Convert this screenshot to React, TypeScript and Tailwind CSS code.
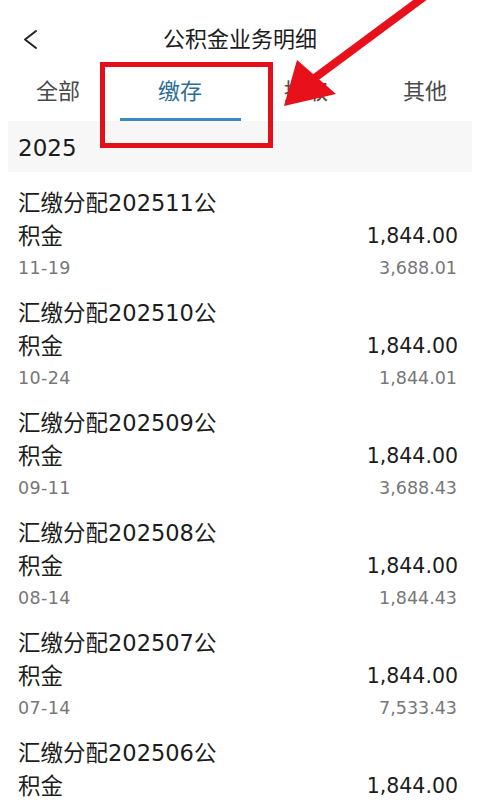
import React from 'react'

// ── Dados da lista ─────────────────────────────
const records = [
  { title: '汇缴分配202511公积金', date: '11-19', amount: '1,844.00', balance: '3,688.01' },
  { title: '汇缴分配202510公积金', date: '10-24', amount: '1,844.00', balance: '1,844.01' },
  { title: '汇缴分配202509公积金', date: '09-11', amount: '1,844.00', balance: '3,688.43' },
  { title: '汇缴分配202508公积金', date: '08-14', amount: '1,844.00', balance: '1,844.43' },
  { title: '汇缴分配202507公积金', date: '07-14', amount: '1,844.00', balance: '7,533.43' },
  { title: '汇缴分配202506公积金', date: '06-13', amount: '1,844.00', balance: '5,689.43' },
]

const tabs = ['全部', '缴存', '提取', '其他']

export default function App() {
  return (
    <div
      className="relative w-[480px] h-[802px] overflow-hidden bg-white text-[#1c1c1c]"
      style={{ fontFamily: '"DejaVu Sans", "Noto Sans CJK SC", sans-serif' }}
    >
      {/* Header */}
      <div className="relative flex h-[80px] items-center justify-center">
        <svg className="absolute left-[22px] top-[28px]" width="18" height="24" viewBox="0 0 18 24" fill="none">
          <path d="M14 3 L3 11.5 L14 20" stroke="#222" strokeWidth="2" strokeLinecap="round" strokeLinejoin="round" />
        </svg>
        <span className="text-[22px] leading-none">公积金业务明细</span>
      </div>

      {/* Tabs */}
      <div className="grid h-[41px] grid-cols-4">
        {tabs.map((t, i) => (
          <div key={t} className="flex flex-col items-center">
            <span
              className={`text-[22px] leading-[24px] ${i === 1 ? 'text-[#2c6e96]' : 'text-[#4a4a4a]'} ${i === 0 ? '-ml-[4px]' : ''} ${i === 2 ? 'ml-[12px]' : ''} ${i === 3 ? 'ml-[10px]' : ''}`}
            >
              {t}
            </span>
            {i === 1 && <div className="mt-[14px] h-[3px] w-[121px] bg-[#3a8ac2]" />}
          </div>
        ))}
      </div>

      {/* Ano */}
      <div className="mx-[8px] flex h-[51px] items-center bg-[#f7f7f7] px-[10px] pt-[3px]">
        <span className="text-[23px] leading-none">2025</span>
      </div>

      {/* Lista */}
      <div className="px-[18px]">
        {records.map(r => (
          <div key={r.date} className="h-[110px] pt-[15px]">
            <div className="flex items-end justify-between">
              <div className="w-[212px] text-[22.5px] leading-[33px]">{r.title}</div>
              <div className="pr-[4px] text-[20.5px] leading-[33px]">{r.amount}</div>
            </div>
            <div className="flex items-center justify-between text-[17.5px] leading-[30px] text-[#777]">
              <span className="tracking-[0.4px]">{r.date}</span>
              <span className="pr-[5px]">{r.balance}</span>
            </div>
          </div>
        ))}
      </div>

      {/* Anotacao vermelha */}
      <div className="absolute left-[100px] top-[62px] h-[86px] w-[173px] border-[5px] border-[#e3101c]" />
      <svg className="absolute left-0 top-0" width="480" height="130" viewBox="0 0 480 130">
        <line x1="428" y1="-6" x2="312" y2="80" stroke="#e8101b" strokeWidth="8" />
        <polygon points="284,106 297,60 336,94" fill="#e8101b" />
      </svg>
    </div>
  )
}
